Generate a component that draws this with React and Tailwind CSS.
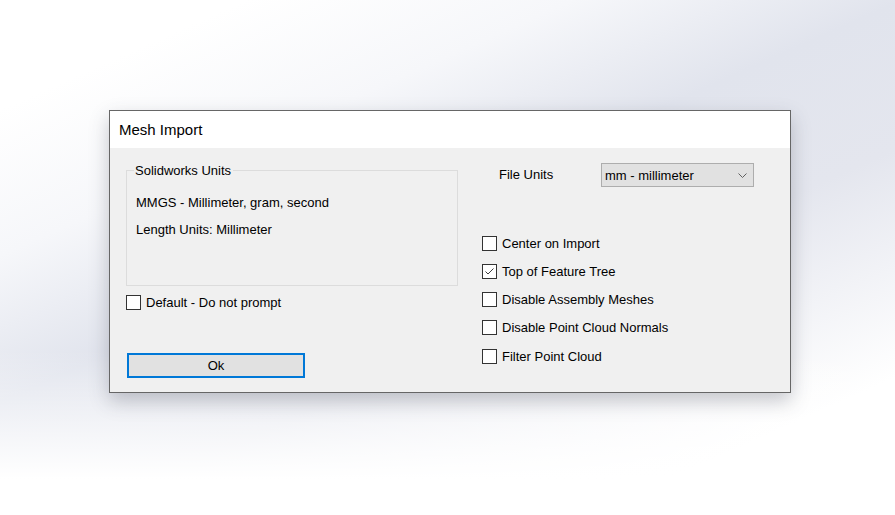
import React from 'react';

const CheckBox = ({ checked }) => (
  <div className="w-[15px] h-[15px] shrink-0 border border-[#333333] bg-white flex items-center justify-center">
    {checked && (
      <svg width="13" height="13" viewBox="0 0 13 13">
        <path d="M2.5 6.5 L5 9 L10.5 3.5" fill="none" stroke="#3c3c3c" strokeWidth="1" />
      </svg>
    )}
  </div>
);

const CheckRow = ({ label, checked }) => (
  <div className="h-[28.25px] flex items-center gap-[5px]">
    <CheckBox checked={checked} />
    <span className="leading-[15px]">{label}</span>
  </div>
);

const App = () => {
  const options = [
    { label: 'Center on Import', checked: false },
    { label: 'Top of Feature Tree', checked: true },
    { label: 'Disable Assembly Meshes', checked: false },
    { label: 'Disable Point Cloud Normals', checked: false },
    { label: 'Filter Point Cloud', checked: false },
  ];

  return (
    <div className="w-[895px] h-[515px] overflow-hidden bg-[linear-gradient(to_bottom,rgba(255,255,255,0)_68%,#ffffff_93%),linear-gradient(156deg,#ffffff_12%,#f6f7fa_28%,#e1e4ed_44%,#e4e6ee_60%,#ffffff_85%)] pt-[110px] pl-[109px] font-['Liberation_Sans',Arial,sans-serif] text-[13px] text-black">
      {/* Dialog */}
      <div className="w-[682px] h-[283px] border border-[#666666] bg-[#f0f0f0] flex flex-col shadow-[0_8px_18px_rgba(60,64,80,0.28)]">
        {/* Title bar */}
        <div className="h-[37px] bg-white flex items-center pl-[9px] pt-[2px] text-[15px] shrink-0">
          Mesh Import
        </div>

        {/* Body */}
        <div className="flex flex-1 pt-[15px]">
          {/* Left column */}
          <div className="pl-[16px] flex flex-col">
            <fieldset className="w-[332px] h-[123px] border border-[#dcdcdc] pl-[9px]">
              <legend className="ml-[-2px] pl-[1px] pr-[2px] leading-[15px]">Solidworks Units</legend>
              <div className="mt-[17px] leading-[15px]">MMGS - Millimeter, gram, second</div>
              <div className="mt-[12px] leading-[15px]">Length Units: Millimeter</div>
            </fieldset>

            <div className="mt-[9px] flex items-center gap-[5px]">
              <CheckBox />
              <span className="leading-[15px]">Default - Do not prompt</span>
            </div>

            <button className="mt-[43px] ml-[1px] w-[178px] h-[25px] border-2 border-[#0078d7] bg-[#e1e1e1] leading-[15px]">
              Ok
            </button>
          </div>

          {/* Right column */}
          <div className="ml-[24px] flex flex-col">
            <div className="flex items-center">
              <span className="w-[119px] pl-[17px] leading-[15px] -mt-[2px]">File Units</span>
              <div className="w-[153px] h-[24px] border border-[#adadad] bg-[#e1e1e1] flex items-center justify-between pl-[3px] pr-[6px]">
                <span className="leading-[15px]">mm - millimeter</span>
                <svg width="9" height="5" viewBox="0 0 9 5">
                  <path d="M0.5 0.5 L4.5 4.5 L8.5 0.5" fill="none" stroke="#606060" strokeWidth="1" />
                </svg>
              </div>
            </div>

            <div className="mt-[42px] flex flex-col">
              {options.map(o => (
                <CheckRow key={o.label} label={o.label} checked={o.checked} />
              ))}
            </div>
          </div>
        </div>
      </div>
    </div>
  );
};

export default App;
